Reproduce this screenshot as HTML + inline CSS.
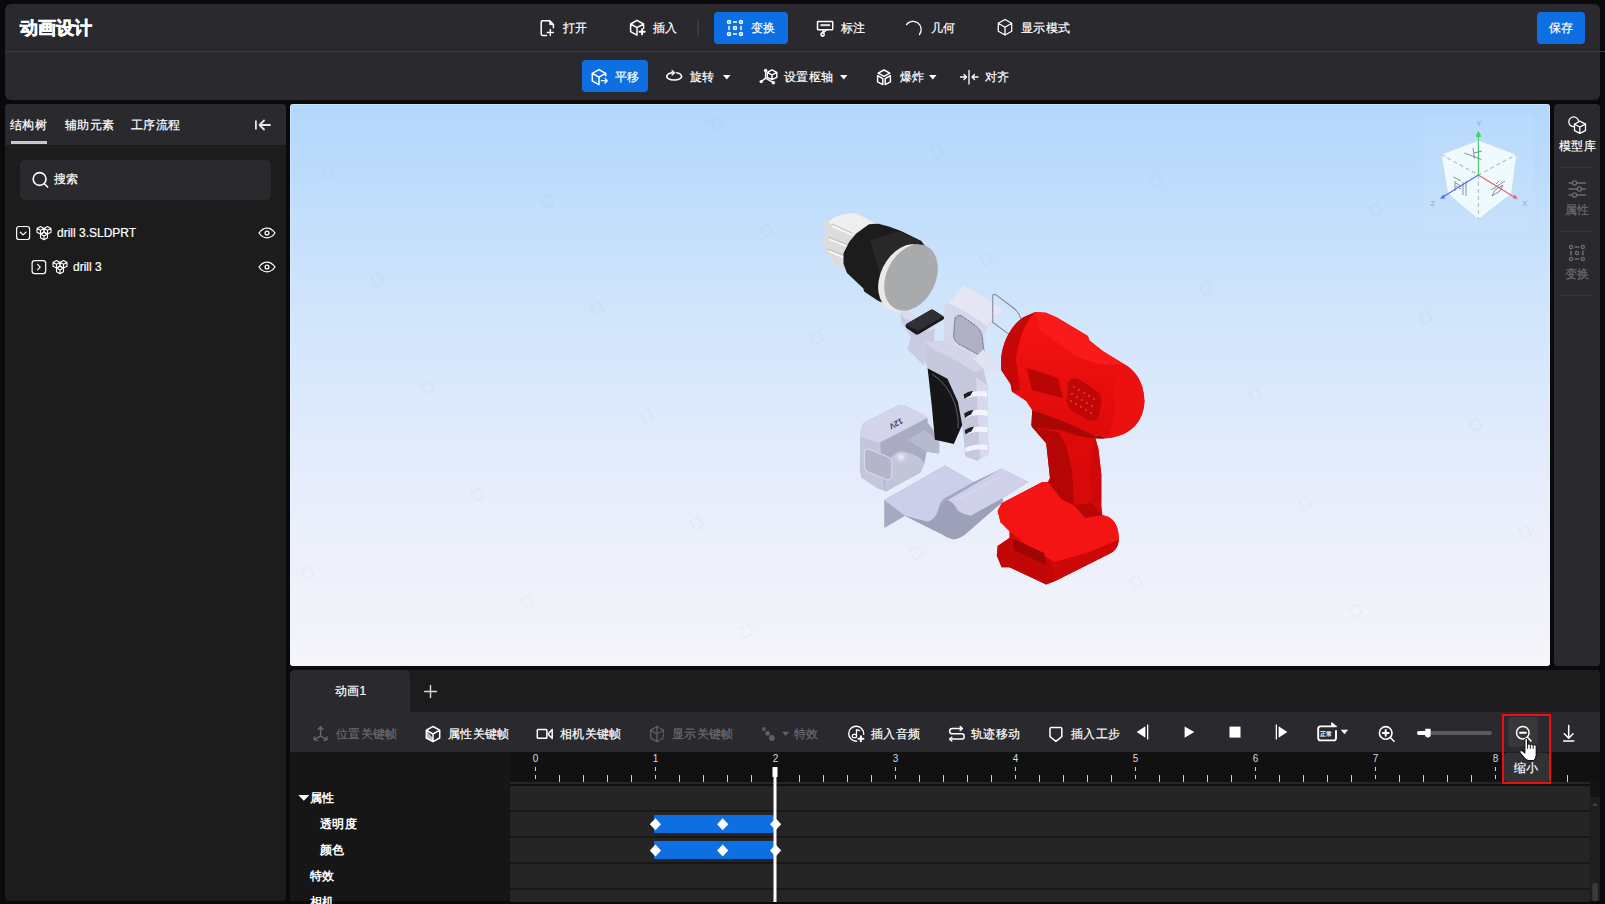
<!DOCTYPE html>
<html><head><meta charset="utf-8">
<style>
*{margin:0;padding:0;box-sizing:border-box}
html,body{width:1605px;height:904px;overflow:hidden;background:#0a0a0c;font-family:"Liberation Sans",sans-serif;color:#fff}
.a{position:absolute}
.t{position:absolute;white-space:nowrap;line-height:1;font-size:12px;letter-spacing:0.3px;color:#fff;-webkit-text-stroke:0.2px currentColor}
svg{position:absolute;overflow:visible}
#hdr{left:5px;top:4px;width:1595px;height:96px;background:#2a292e;border-radius:6px}
#sep1{left:5px;top:51px;width:1600px;height:1px;background:#3b3a3f}
.btn{position:absolute;border-radius:4px;background:#0e6fe3}
#left{left:5px;top:104px;width:281px;height:797px;background:#1c1c1d;border-radius:4px}
#lefttabs{left:5px;top:104px;width:281px;height:41px;background:#2a292e;border-radius:4px 4px 0 0}
#vp{left:290px;top:104px;width:1260px;height:562px;border-radius:3px;background:linear-gradient(#b2d7fd 0%,#d3e6fb 40%,#e9eefb 72%,#f5f5fa 100%);box-shadow:inset 0 0 0 1px rgba(225,242,255,0.45)}
#rside{left:1554px;top:104px;width:46px;height:562px;background:#2a292e;border-radius:4px}
#tl{left:290px;top:670px;width:1310px;height:231px;background:#1c1c1d;border-radius:4px;overflow:hidden}
.b{font-weight:bold;-webkit-text-stroke:0}
.g{color:#6b6b70}
</style></head><body>
<div id="hdr" class="a"></div>
<div id="sep1" class="a"></div>
<div class="t b" style="left:20px;top:19px;font-size:18px;letter-spacing:0;-webkit-text-stroke:0.5px #fff">动画设计</div>

<div class="btn" style="left:714px;top:12px;width:74px;height:32px"></div>
<div class="btn" style="left:1537px;top:12px;width:48px;height:32px"></div>
<div class="btn" style="left:582px;top:60px;width:66px;height:32px"></div>

<!-- header texts row1 -->
<div class="t" style="left:563px;top:22px">打开</div>
<div class="t" style="left:653px;top:22px">插入</div>
<div class="t" style="left:751px;top:22px">变换</div>
<div class="t" style="left:841px;top:22px">标注</div>
<div class="t" style="left:931px;top:22px">几何</div>
<div class="t" style="left:1021px;top:22px">显示模式</div>
<div class="t" style="left:1549px;top:22px">保存</div>
<!-- row2 -->
<div class="t" style="left:615px;top:71px">平移</div>
<div class="t" style="left:690px;top:71px">旋转</div>
<div class="t" style="left:784px;top:71px">设置枢轴</div>
<div class="t" style="left:900px;top:71px">爆炸</div>
<div class="t" style="left:985px;top:71px">对齐</div>

<div id="left" class="a"></div>
<div id="lefttabs" class="a"></div>
<div id="vp" class="a"></div>
<svg width="1605" height="904" style="left:0;top:0"><g fill="none" stroke="#4a7ab0" stroke-opacity="0.11" stroke-width="1" stroke-dasharray="1.5 1"><rect x="303.2" y="568.0" width="9" height="10" transform="rotate(-28 307.7 573.0)"/><rect x="323.5" y="167.4" width="9" height="10" transform="rotate(-28 328.0 172.4)"/><rect x="373.3" y="274.8" width="9" height="10" transform="rotate(-28 377.8 279.8)"/><rect x="423.1" y="382.2" width="9" height="10" transform="rotate(-28 427.6 387.2)"/><rect x="472.9" y="489.6" width="9" height="10" transform="rotate(-28 477.4 494.6)"/><rect x="522.7" y="597.0" width="9" height="10" transform="rotate(-28 527.2 602.0)"/><rect x="543.0" y="196.4" width="9" height="10" transform="rotate(-28 547.5 201.4)"/><rect x="592.8" y="303.8" width="9" height="10" transform="rotate(-28 597.3 308.8)"/><rect x="642.6" y="411.2" width="9" height="10" transform="rotate(-28 647.1 416.2)"/><rect x="692.4" y="518.6" width="9" height="10" transform="rotate(-28 696.9 523.6)"/><rect x="742.2" y="626.0" width="9" height="10" transform="rotate(-28 746.7 631.0)"/><rect x="712.7" y="118.0" width="9" height="10" transform="rotate(-28 717.2 123.0)"/><rect x="762.5" y="225.4" width="9" height="10" transform="rotate(-28 767.0 230.4)"/><rect x="812.3" y="332.8" width="9" height="10" transform="rotate(-28 816.8 337.8)"/><rect x="862.1" y="440.2" width="9" height="10" transform="rotate(-28 866.6 445.2)"/><rect x="911.9" y="547.6" width="9" height="10" transform="rotate(-28 916.4 552.6)"/><rect x="932.2" y="147.0" width="9" height="10" transform="rotate(-28 936.7 152.0)"/><rect x="982.0" y="254.4" width="9" height="10" transform="rotate(-28 986.5 259.4)"/><rect x="1031.8" y="361.8" width="9" height="10" transform="rotate(-28 1036.3 366.8)"/><rect x="1081.6" y="469.2" width="9" height="10" transform="rotate(-28 1086.1 474.2)"/><rect x="1131.4" y="576.6" width="9" height="10" transform="rotate(-28 1135.9 581.6)"/><rect x="1151.7" y="176.0" width="9" height="10" transform="rotate(-28 1156.2 181.0)"/><rect x="1201.5" y="283.4" width="9" height="10" transform="rotate(-28 1206.0 288.4)"/><rect x="1251.3" y="390.8" width="9" height="10" transform="rotate(-28 1255.8 395.8)"/><rect x="1301.1" y="498.2" width="9" height="10" transform="rotate(-28 1305.6 503.2)"/><rect x="1350.9" y="605.6" width="9" height="10" transform="rotate(-28 1355.4 610.6)"/><rect x="1371.2" y="205.0" width="9" height="10" transform="rotate(-28 1375.7 210.0)"/><rect x="1421.0" y="312.4" width="9" height="10" transform="rotate(-28 1425.5 317.4)"/><rect x="1470.8" y="419.8" width="9" height="10" transform="rotate(-28 1475.3 424.8)"/><rect x="1520.6" y="527.2" width="9" height="10" transform="rotate(-28 1525.1 532.2)"/></g></svg>
<svg width="1605" height="904" style="left:0;top:0">
<defs>
  <linearGradient id="gHous" x1="0" y1="0" x2="1" y2="1">
    <stop offset="0" stop-color="#e4e5f4"/><stop offset="1" stop-color="#b9bbd3"/>
  </linearGradient>
  <linearGradient id="gRed2" x1="0" y1="0" x2="0" y2="1"><stop offset="0" stop-color="#f71313"/><stop offset="0.45" stop-color="#de0a0a"/><stop offset="1" stop-color="#d00808"/></linearGradient>
  <linearGradient id="gRed" x1="0" y1="0" x2="1" y2="0">
    <stop offset="0" stop-color="#d80c0c"/><stop offset="0.5" stop-color="#f01515"/><stop offset="1" stop-color="#e41010"/>
  </linearGradient>
  <linearGradient id="gTip" x1="0" y1="0" x2="1" y2="1">
    <stop offset="0" stop-color="#f4f4f4"/><stop offset="1" stop-color="#c8c8c8"/>
  </linearGradient>
  <linearGradient id="gBase" x1="0" y1="0" x2="0" y2="1">
    <stop offset="0" stop-color="#d2d4ec"/><stop offset="1" stop-color="#b4b6cf"/>
  </linearGradient>
</defs>
<!-- view cube -->
<g>
  <rect x="1423" y="114" width="111" height="113" fill="#ffffff" opacity="0.06"/>
  <path d="M1478.4 140.3L1516.6 154.5L1511.6 193.6L1478.4 219.5L1447.9 193.6L1441.2 154.5Z" fill="#f2fcff" opacity="0.93"/>
  <g stroke="#b9bdc6" stroke-width="1.2" stroke-dasharray="4 3" fill="none">
    <path d="M1441.2 154.5L1478.4 175L1516.6 154.5M1478.4 175V219.5"/>
  </g>
  <g stroke="#d0d4da" stroke-width="0.8" fill="none" opacity="0.8">
    <path d="M1478.4 140.3L1516.6 154.5L1511.6 193.6L1478.4 219.5L1447.9 193.6L1441.2 154.5Z"/>
  </g>
  <path d="M1478.4 175V134" stroke="#44d36a" stroke-width="1.2"/>
  <path d="M1476.2 136.5L1478.4 131.5L1480.6 136.5Z" fill="#44d36a" stroke="#44d36a" stroke-width="1"/>
  <path d="M1478.4 175L1442 197.5" stroke="#4f6cf5" stroke-width="1.2"/>
  <path d="M1440 198.7L1443.5 194.6L1445 198.4Z" fill="#4f6cf5"/>
  <path d="M1478.4 175L1515 197.5" stroke="#e8606a" stroke-width="1.2"/>
  <path d="M1518 198.7L1514.5 194.6L1513 198.4Z" fill="#e8606a"/>
  <g font-family="Liberation Sans" font-size="8" fill="#a0a6b0" text-anchor="middle">
    <text x="1479" y="126">Y</text><text x="1432.6" y="205.5">Z</text><text x="1525" y="205.5">X</text>
  </g>
  <g stroke="#6b7280" stroke-width="0.8" fill="none">
    <path d="M1464.5 153L1481.5 159.5M1473 148L1474.5 158.5M1474 153L1482 151"/>
    <path d="M1453.5 177L1461 181M1455 181V191M1455.5 183L1461 186M1456 186L1461 189M1463 182V195M1466 181V196"/>
    <path d="M1491 190L1505 181M1496 184L1499 181M1492 196L1500 191L1503 185L1495 190Z"/>
  </g>
</g>
<!-- battery base plate -->
<path d="M884.5 499.9L944.8 465.5L973.7 481.9L1001.6 468.5L1028.5 481.9L1002.6 497.9L1002.6 501.9Q990 512 964.7 534.8Q958 539.5 952.8 539.2Q947 538 942.8 534.8L904.9 515.8L884.5 527.8Z" fill="#a4a7c0"/>
<path d="M884.5 499.9L884.5 527.8L904.9 515.8L888 502.9Z" fill="#a7a9c2"/>
<path d="M904.9 515.8L927.9 521.8Q935 520 937.8 513.8Q940 503 947.8 500.9Q953 501 957.8 510.8Q963 515 970.7 515.8L1002.6 497.9L1002.6 501.9L964.7 534.8Q958 539.5 952.8 539.2Q947 538 942.8 534.8Z" fill="#9da0b8"/>
<path d="M884.5 499.9L944.8 465.5L973.7 481.9L947 497Q940 500 938.8 508Q936 519 927.9 521.8L905 515.8L888 502.9Z" fill="#cccfe9"/>
<path d="M947.8 499.9L1001.6 468.5L1028.5 481.9L1002.6 497.9L970.7 515.8Q963 514 957.8 510.8Q954 502 947.8 499.9Z" fill="#cfd1ea"/>
<path d="M956 500L1000 477" stroke="#e8e9f6" stroke-width="0.8" stroke-dasharray="2 1.5" fill="none"/>
<!-- battery cap -->
<path d="M860.3 431.5L863.4 423.1L899.2 404.7L904.4 405.3L922.3 413.7L927.5 417.9L927.5 422.6L932.8 429.4L939.1 442.1L939.1 453.6L926.5 451.5L924.4 463.1L920.2 472.5L885.5 491.5L877.1 488.3L861.3 477.8L859.7 469.4Z" fill="#c4c6dc"/>
<path d="M860.3 431.5L863.4 423.1L899.2 404.7L904.4 405.3L922.3 413.7L927.5 417.9L880.2 442.5L877 442L861 437Z" fill="#d2d4e9"/>
<path d="M880.2 442.5L927.5 417.9L927.5 422.6L932.8 429.4L939.1 442.1L939.1 453.6L926.5 451.5L924.4 463.1L920.2 472.5L885.5 491.5L882 470L881 455Z" fill="#a9abc2"/>
<path d="M884 468Q890 452 905 452Q920 455 924.4 463.1L920.2 472.5L885.5 491.5Z" fill="#c2c4da"/>
<radialGradient id="hl"><stop offset="0" stop-color="#f4f5ff"/><stop offset="1" stop-color="#c2c4da" stop-opacity="0"/></radialGradient><ellipse cx="901" cy="457" rx="9" ry="8" fill="url(#hl)"/>
<path d="M907 440L925 430L939.1 442.1L939.1 453.6L926.5 451.5Z" fill="#b7b9cf"/>
<path d="M864.5 452Q865 448 869 449L888 457Q892 459 891.8 464L891.5 476Q891 481 886 479.5L868 472Q864.5 470 864.5 466Z" fill="#b3b5cb" stroke="#d6d8ea" stroke-width="1.2"/>
<text x="901" y="418" transform="rotate(152 901 418)" font-family="Liberation Sans" font-size="8" font-weight="bold" fill="#3c3d48">12V</text>
<!-- housing left small part -->
<path d="M900.3 313.6L907.6 311.5L934.9 328.3L933.9 343L924.4 343L924.4 366L907.6 349.3L910.8 336.7L901.3 322Z" fill="#c9cbe0"/>
<path d="M900.3 313.6L907.6 311.5L934.9 328.3L930 331L905 318Z" fill="#dadcee"/>
<!-- housing upper cup -->
<path d="M944.4 306.3L964.3 285.3L1004.2 310.5Q990 318 985.3 332.5L983.2 349.3Q990 360 1000 364L998 372.4L983.2 372.4Q965 365 955 355L944 345Z" fill="#d5d7eb"/>
<path d="M964.3 285.3L1004.2 310.5Q992 316 987 326Q968 312 948 303Z" fill="#e6e7f5"/>
<path d="M955 318Q958 314 962 316L976 326Q981 330 982 336L984 350Q984 357 979 355L959 344Q954 341 953.5 336Z" fill="#aeb0c6" stroke="#33333c" stroke-width="0.7" stroke-dasharray="1.2 0.7"/>
<path d="M983.2 349.3Q990 360 1000 364L998 372.4L983.2 372.4Q970 368 962 360L975 358Z" fill="#e2e3f2"/>
<!-- housing lower body -->
<path d="M924.4 342L943.3 340.9L964.3 351.4L983.2 368.2L987.4 385L988.5 454.4L976.9 460.7L965.4 456.5L962.2 425L958 401.9L947.5 378.7L927.6 368.2L924.4 360Z" fill="#c6c8de"/>
<path d="M924.4 342L943.3 340.9L964.3 351.4L983.2 368.2L975 372L955 360L935 350Z" fill="#d3d5e9"/>
<path d="M976 378L987.4 385L988.5 454.4L980 459Z" fill="#d7d9ed"/>
<g fill="#f4f5fc">
  <path d="M963.5 394.5Q975 389.5 987 391.5L987 397Q975 394.5 964.5 399Z"/>
  <path d="M964 413.4Q975 408.4 987.5 410.4L987.5 416Q975 413.4 965 418Z"/>
  <path d="M964.5 430.2Q975 425.2 987.5 427.2L987.5 432.6Q975 430.2 965.5 434.6Z"/>
  <path d="M965 448Q975 443 987.5 445L987.5 450Q975 448 966 452Z"/>
</g>
<g fill="#1f1f24">
  <path d="M963.5 394.5Q968 391.5 973 390.8L970.5 395.6Q967 396.8 964.5 399Z"/>
  <path d="M964 413.4Q968.5 410.4 973.5 409.7L971 414.5Q967.5 415.7 965 418Z"/>
  <path d="M964.5 430.2Q969 427.2 974 426.5L971.5 431.3Q968 432.5 965.5 434.6Z"/>
</g>
<!-- black grip insert -->
<path d="M927.6 368.2L947.5 378.7L958 401.9L962.2 425L953.8 443.9L934.9 439.7L931.8 406.1Z" fill="#161618"/>
<path d="M932 374Q948 384 955 404Q959 418 958 428" stroke="#6a6a70" stroke-width="0.9" fill="none"/>
<!-- black key -->
<path d="M906 324.3L930.5 310Q932 309 933.5 310L943.5 316.5Q945 318 943.3 319.5L918.5 334.3Q917 335 915.5 334.3L906.5 328Q904.5 326 906 324.3Z" fill="#1a1a1c"/>
<path d="M906 324.3L930.5 310Q932 309 933.5 310L943.5 316.5L918 331L906.5 325Z" fill="#303034"/>
<!-- wire loop -->
<path d="M992.7 323V296Q992.7 293.7 995.8 294.7L1012.6 307.3Q1019 312 1021 318.9M993 322.5L1009.5 334.6" stroke="#8a8c96" stroke-width="1.1" fill="none"/>
<!-- chuck -->
<path d="M826.6 228.2L821.6 225.1L824.3 221.7L827.8 222.4C835 215 846 212.5 857.6 213.9L873.9 222.4C860 229 850 242 844.4 254.6C843 262 843.5 267 844.4 270.8C835 266 826 256 822.7 242.2Z" fill="#dcdcdc"/>
<path d="M827.8 222.4C835 215 846 212.5 857.6 213.9L873.9 222.4C866 226 860 229 855 234L835 226Z" fill="#efefef"/>
<path d="M832 226L853 235M829 239L849 247M829 251L845 258" stroke="#f6f6f6" stroke-width="2.2" fill="none"/>
<path d="M832 224L852 233M828 237L848 245M828 249L845 256" stroke="#a8a8a8" stroke-width="0.7" fill="none"/>
<path d="M856.3 233.6L869 224.3L878.3 223.7L888.8 226.6L900.4 230.7L909.7 235.3L921.3 241.1L925 246L890 305L878.3 301L864.4 291.7L863.2 288.2L847 273.1L843.5 263.8L843.5 253.3L849.3 241.7Z" fill="#1c1c1c"/>
<path d="M870 240L900 231L921 241L900 270L882 282Z" fill="#282828"/>
<ellipse cx="905.5" cy="278" rx="35.5" ry="25" transform="rotate(-64 905.5 278)" fill="#e9e9e9"/>
<ellipse cx="911" cy="277.5" rx="35" ry="24.5" transform="rotate(-64 911 277.5)" fill="#a8aaab"/>

<!-- red drill -->
<path d="M1001.2 357.6C1003 340 1012 325 1022.9 317.4L1035.3 312L1046.1 312.7L1056.9 317.4L1087.9 336L1089.5 340.6L1103.4 351.5L1123.5 363.8C1135 370 1144 382 1144.4 401C1144 420 1132 436 1106.5 438.2L1100.3 435L1094.6 435.5L1098.4 449L1101.3 474.2L1101.3 503.3L1102.3 514.9L1108.1 516.8C1115 520 1119 528 1118.8 540.1C1118 548 1114 552 1110 553.6L1055.8 580.7L1046.2 584.6L1009.4 567.2L1001.6 567.2L996.8 555.6L997.7 545.9L1009.4 538.1L1009.4 528.4L1000.6 522.6L997.7 511L1001.6 503.3L1042.3 482L1048.1 482L1050 478.1L1046.2 443.2L1032.6 427.7L1031.4 425.8L1032.2 410.3L1026 401L1012 391.7L1010.5 384L1001.2 370Z" fill="url(#gRed2)"/>
<!-- front ring darker -->
<path d="M1001.2 357.6C1003 340 1012 325 1022.9 317.4L1035.3 312C1025 322 1018 340 1016 360L1020 390L1012 391.7L1010.5 384L1001.2 370Z" fill="#c60707"/>
<!-- top highlight -->
<path d="M1035.3 312L1046.1 312.7L1056.9 317.4L1087.9 336L1089.5 340.6L1103.4 351.5L1123.5 363.8C1110 366 1090 365 1070 352L1040 330Z" fill="#fa1a1a"/>
<!-- end cap -->
<path d="M1123.5 363.8C1135 370 1144 382 1144.4 401C1144 420 1132 436 1106.5 438.2C1115 425 1118 400 1112 375Z" fill="#ec1010"/>
<!-- latch rect -->
<path d="M1026.7 368L1058 378L1063 397.9L1032 390Z" fill="#b80606"/>
<!-- vent -->
<path d="M1068 383Q1072 376 1080 380L1098 392Q1103 397 1101 404L1098 418Q1095 423 1088 420L1071 410Q1066 405 1067 398Z" fill="#c00707"/>
<g fill="#ff4040" opacity="0.8">
  <circle cx="1074" cy="387" r="1"/><circle cx="1079" cy="390" r="1"/><circle cx="1084" cy="393" r="1"/><circle cx="1089" cy="396" r="1"/><circle cx="1094" cy="399" r="1"/>
  <circle cx="1072" cy="394" r="1"/><circle cx="1077" cy="397" r="1"/><circle cx="1082" cy="400" r="1"/><circle cx="1087" cy="403" r="1"/><circle cx="1092" cy="406" r="1"/>
  <circle cx="1071" cy="401" r="1"/><circle cx="1076" cy="404" r="1"/><circle cx="1081" cy="407" r="1"/><circle cx="1086" cy="410" r="1"/><circle cx="1091" cy="413" r="1"/>
</g>
<!-- underside shadow -->
<path d="M1032.2 410.3L1060 420L1094.6 435.5L1100.3 435L1106.5 438.2C1095 440 1080 437 1060 430L1032.6 427.7L1031.4 425.8Z" fill="#a90606"/>
<!-- grip front darker -->
<path d="M1032.6 427.7L1046.2 443.2L1050 478.1L1048.1 482L1062 500L1074 505L1072 470L1066 445L1058 432Z" fill="#b50606"/>
<path d="M1094.6 435.5L1098.4 449L1101.3 474.2L1101.3 503.3L1092 503L1090 470Z" fill="#cf0909"/>
<!-- base top lighter -->
<path d="M1001.6 503.3L1042.3 482L1048.1 482L1062 500L1080 508L1102.3 514.9L1108.1 516.8C1115 520 1119 528 1118.8 540.1L1090 552L1055 562L1030 548L1008 530L1000.6 522.6L997.7 511Z" fill="#f41414"/>
<path d="M1074 505L1092 503L1102.3 514.9L1085 518Z" fill="#b80606"/>
<!-- base front darker -->
<path d="M997.7 545.9L1009.4 538.1L1030 548L1050 560L1055.8 580.7L1046.2 584.6L1009.4 567.2L1001.6 567.2L996.8 555.6Z" fill="#c20707"/>
<path d="M1012 538L1044 553L1046 565L1014 550Z" fill="#9e0505"/>
<path d="M1055.8 580.7L1110 553.6C1114 552 1118 548 1118.8 540.1L1090 552L1055 562Z" fill="#cc0808"/>
</svg>

<div id="rside" class="a"></div>
<div id="tl" class="a"></div>

<!-- LEFT PANEL CONTENT -->
<div class="t" style="left:10px;top:119px">结构树</div>
<div class="t" style="left:65px;top:119px">辅助元素</div>
<div class="t" style="left:131px;top:119px">工序流程</div>
<div class="a" style="left:11px;top:141px;width:36px;height:3px;background:#c9c9c9"></div>
<div class="a" style="left:20px;top:160px;width:251px;height:40px;background:#2a292e;border-radius:5px"></div>
<div class="t" style="left:54px;top:173px">搜索</div>
<div class="t" style="left:57px;top:227px;font-size:12px;letter-spacing:0">drill 3.SLDPRT</div>
<div class="t" style="left:73px;top:261px;font-size:12px;letter-spacing:0">drill 3</div>

<!-- RIGHT SIDEBAR -->
<div class="t" style="left:1559px;top:140px">模型库</div>
<div class="a" style="left:1560px;top:167px;width:33px;height:1px;background:#37363b"></div>
<div class="t g" style="left:1565px;top:204px">属性</div>
<div class="a" style="left:1560px;top:231px;width:33px;height:1px;background:#37363b"></div>
<div class="t g" style="left:1565px;top:268px">变换</div>
<div class="a" style="left:1560px;top:295px;width:33px;height:1px;background:#37363b"></div>

<!-- TIMELINE -->
<div class="a" style="left:290px;top:670px;width:120px;height:42px;background:#2a292e;border-radius:5px 5px 0 0"></div>
<div class="a" style="left:290px;top:712px;width:1310px;height:40px;background:#2a292e"></div>
<div class="a" style="left:290px;top:752px;width:220px;height:149px;background:#161617"></div>
<div class="a" style="left:510px;top:752px;width:1090px;height:30px;background:#111112"></div>
<div class="a" style="left:510px;top:782px;width:1090px;height:119px;background:#171718"></div>
<div class="a" style="left:510px;top:786px;width:1080px;height:24px;background:#252526"></div>
<div class="a" style="left:510px;top:812px;width:1080px;height:24px;background:#252526"></div>
<div class="a" style="left:510px;top:838px;width:1080px;height:24px;background:#252526"></div>
<div class="a" style="left:510px;top:864px;width:1080px;height:24px;background:#252526"></div>
<div class="a" style="left:510px;top:890px;width:1080px;height:12px;background:#252526"></div>
<div class="a" style="left:1590px;top:782px;width:10px;height:119px;background:#1e1e1f"></div>
<div class="a" style="left:654px;top:815px;width:121px;height:18px;background:#0e6fe3"></div>
<div class="a" style="left:654px;top:841px;width:121px;height:18px;background:#0e6fe3"></div>

<div class="t" style="left:335px;top:685px">动画1</div>
<div class="t g" style="left:336px;top:728px">位置关键帧</div>
<div class="t" style="left:448px;top:728px">属性关键帧</div>
<div class="t" style="left:560px;top:728px">相机关键帧</div>
<div class="t g" style="left:672px;top:728px">显示关键帧</div>
<div class="t g" style="left:794px;top:728px">特效</div>
<div class="t" style="left:871px;top:728px">插入音频</div>
<div class="t" style="left:971px;top:728px">轨迹移动</div>
<div class="t" style="left:1071px;top:728px">插入工步</div>

<div class="t b" style="left:310px;top:792px">属性</div>
<div class="t b" style="left:320px;top:818px">透明度</div>
<div class="t b" style="left:320px;top:844px">颜色</div>
<div class="t b" style="left:310px;top:870px">特效</div>
<div class="t b" style="left:310px;top:896px">相机</div>

<svg width="1605" height="904" style="left:0;top:0" fill="none" stroke="#fff" stroke-width="1.3" stroke-linecap="round" stroke-linejoin="round">
  <!-- 打开 file+ -->
  <path d="M546.5 35.4H542.6Q541.2 35.4 541.2 34V22.1Q541.2 20.7 542.6 20.7H549.8L553.4 24.6V27.8" stroke-width="1.5"/>
  <path d="M549.8 21.5V24.6H552.6Z" fill="#fff" stroke-width="1"/><path d="M550.3 29.4V35.6M547.2 32.5H553.4" stroke-width="1.4"/>
  <!-- 插入 cube+ -->
  <path d="M637 20.4L630.6 24V31.6L637 35.2M637 20.4L643.6 24V28.6M630.6 24L637 27.6L643.6 24M637 27.6V35" stroke-width="1.5"/>
  <path d="M642.1 29.2V34.4M639.5 31.8H644.7" stroke-width="1.9"/>
  <rect x="697.5" y="19.5" width="1.2" height="16.5" fill="#48484d" stroke="none"/>
  <!-- 变换 grid -->
  <g stroke-width="1.5">
    <circle cx="729" cy="22" r="1.5"/><circle cx="741" cy="22" r="1.5"/><circle cx="735" cy="28" r="1.5"/>
    <circle cx="729" cy="34" r="1.5"/><circle cx="741" cy="34" r="1.5"/>
    <path d="M733.5 22H736.5M733.5 34H736.5M729 26.5V29.5M741 26.5V29.5"/>
  </g>
  <!-- 标注 -->
  <rect x="817.5" y="21.5" width="15.2" height="8.2" rx="0.6" stroke-width="1.5"/>
  <rect x="820.4" y="24.1" width="9.7" height="2.1" fill="#dadada" stroke="none"/>
  <path d="M826.6 29.8L823 33M822.8 29.8L823 32.6" stroke-width="1.4"/>
  <circle cx="822.6" cy="34.5" r="1.6" stroke-width="1.6"/>
  <!-- 几何 arc -->
  <path d="M906.5 24.5A8 8 0 0 1 919.5 34.5"/>
  <!-- 显示模式 cube -->
  <path d="M1005 19.5L998.3 23.3V31.2L1005 35L1011.7 31.2V23.3ZM998.3 23.3L1005 27.2L1011.7 23.3M1005 27.2V35"/>
  <!-- row2 平移 cube arrow -->
  <path d="M599 69.6L592.3 73.4V81L599 84.6M599 69.6L605.7 73.4V75.8M592.3 73.4L599 77.2L605.7 73.4M599 77.2V84.4" stroke-width="1.5"/>
  <path d="M601.3 80.7H607.2M605 78.4L607.3 80.7L605 83"/>
  <!-- 旋转 -->
  <path d="M676.8 72.85A7.4 3.75 0 1 1 671.6 72.85" stroke-width="1.5"/>
  <path d="M672.2 70.2L675.3 72.8L672.2 75.3Z" fill="#fff" stroke-width="0.6"/>
  <path d="M723 75H730.5L726.75 79.5Z" fill="#fff" stroke="none"/>
  <!-- 设置枢轴 -->
  <path d="M772 69.9L776.8 72.4V77.4L772 79.6L767.3 77.4V72.4ZM767.3 72.4L772 75L776.8 72.4M772 75V79.5" stroke-width="1.4"/>
  <path d="M765.6 70.3V78.1L761.3 81.5M765.6 78.1L773.3 82.6" stroke-width="1.4"/>
  <circle cx="765.6" cy="70.4" r="1.7" fill="#fff" stroke="none"/><circle cx="761.2" cy="81.6" r="1.7" fill="#fff" stroke="none"/><circle cx="773.4" cy="82.7" r="1.7" fill="#fff" stroke="none"/>
  <path d="M840 75H847.5L843.75 79.5Z" fill="#fff" stroke="none"/>
  <!-- 爆炸 -->
  <path d="M884 70L889.8 73.2L884 76.3L878.2 73.2ZM877.6 75.6L882.8 78.6V84.6L877.6 81.8ZM890.4 75.6L885.2 78.6V84.6L890.4 81.8Z" stroke-width="1.5"/>
  <path d="M929 75H936.5L932.75 79.5Z" fill="#fff" stroke="none"/>
  <!-- 对齐 -->
  <path d="M969 70.5V84M960.5 77H966.5M964 74.5L966.5 77L964 79.5M978 77H972M974.5 74.5L972 77L974.5 79.5"/>
</svg>

<svg width="1605" height="904" style="left:0;top:0" fill="none" stroke="#fff" stroke-width="1.3" stroke-linecap="round" stroke-linejoin="round">
  <!-- collapse |<- -->
  <g stroke="#e6e6e6" stroke-width="1.8">
    <path d="M255.9 120.5V129.6" stroke-linecap="butt"/>
    <path d="M264 120.5L259.5 125L264 129.5M259.5 125H270"/>
  </g>
  <!-- search icon -->
  <circle cx="39.6" cy="179" r="6.4" stroke-width="1.6"/>
  <path d="M44.3 183.7L47.6 187" stroke-width="1.6"/>
  <!-- tree row1 -->
  <rect x="16.6" y="226.5" width="13" height="13" rx="2.6" stroke-width="1.2"/>
  <path d="M20.3 232.2L23.1 234.9L25.9 232.2" stroke-width="1.2"/>
  <g id="mdl" stroke-width="1.1">
    <path d="M40.5 226.5L37 228.4V232.2L40.5 234.1L44 232.2V228.4ZM37 228.4L40.5 230.3L44 228.4M40.5 230.3V234"/>
    <path d="M47.5 226.5L44 228.4V232.2L47.5 234.1L51 232.2V228.4ZM44 228.4L47.5 230.3L51 228.4M47.5 230.3V234"/>
    <path d="M44 232.2L40.5 234.1V237.8L44 239.7L47.5 237.8V234.1ZM40.5 234.1L44 236L47.5 234.1M44 236V239.6"/>
  </g>
  <path d="M259 233C263.5 226.5 270.5 226.5 275 233C270.5 239.5 263.5 239.5 259 233Z" stroke-width="1.3"/>
  <circle cx="267" cy="233" r="1.9" stroke-width="1.3"/>
  <!-- tree row2 -->
  <rect x="32.1" y="260.6" width="13.6" height="13" rx="2.6" stroke-width="1.2"/>
  <path d="M37.6 264.4L40.2 267.1L37.6 269.8" stroke-width="1.2"/>
  <use href="#mdl" transform="translate(16 34)"/>
  <path d="M259 267C263.5 260.5 270.5 260.5 275 267C270.5 273.5 263.5 273.5 259 267Z" stroke-width="1.3"/>
  <circle cx="267" cy="267" r="1.9" stroke-width="1.3"/>

  <!-- sidebar: model lib -->
  <circle cx="1573.7" cy="121.8" r="4.9" stroke-width="1.3"/>
  <path d="M1579.8 121.2L1574.5 124.2V130.6L1579.8 133.4L1585.5 130.6V124.2Z" fill="#2a292e" stroke-width="1.3"/>
  <path d="M1574.5 124.2L1579.8 127L1585.5 124.2M1579.8 127V133.2" stroke-width="1.3"/>
  <!-- props -->
  <g stroke="#6e6e72" stroke-width="1.3">
    <path d="M1569 183H1572.3M1576.7 183H1585.5M1569 189H1577.2M1581.6 189H1585.5M1569 195H1572.3M1576.7 195H1585.5"/>
    <circle cx="1574.5" cy="183" r="2.1"/><circle cx="1579.4" cy="189" r="2.1"/><circle cx="1574.5" cy="195" r="2.1"/>
  </g>
  <g stroke="#6e6e72" stroke-width="1.3">
    <circle cx="1571" cy="247" r="1.6"/><circle cx="1582.8" cy="247" r="1.6"/><circle cx="1577" cy="253" r="1.6"/>
    <circle cx="1571" cy="259" r="1.6"/><circle cx="1582.8" cy="259" r="1.6"/>
    <path d="M1575.3 247H1578.5M1575.3 259H1578.5M1571 251.3V254.7M1582.8 251.3V254.7" stroke-width="1.6"/>
  </g>

  <!-- timeline tab + -->
  <path d="M430.5 685.5V697.5M424.5 691.5H436.5" stroke="#dcdcdc" stroke-width="1.4"/>
  <!-- pos keyframe axis (gray) -->
  <g stroke="#6a6a6e" stroke-width="1.4">
    <path d="M320.6 736V727M318.3 729.2L320.6 726.8L322.9 729.2"/>
    <path d="M320.6 736L314.5 739.7M314.4 736.9L314.2 739.9L317.3 740.4"/>
    <path d="M320.6 736L326.7 739.7M326.8 736.9L327 739.9L323.9 740.4"/>
  </g>
  <!-- prop keyframe cube -->
  <path d="M426.5 730.2L433 738.2V741.6L426.5 738Z" fill="#bcbcbc" stroke="none"/>
  <path d="M433 726.5L426.3 730.2V738L433 741.7L439.7 738V730.2ZM426.3 730.2L433 734L439.7 730.2M433 734V741.5" stroke-width="1.5"/>
  <!-- camera -->
  <rect x="537.3" y="729.4" width="9.6" height="8.9" rx="0.8" stroke-width="1.5"/>
  <path d="M552.2 729.5V738.5M552.2 729.5L548 734L552.2 738.5" stroke-width="1.5"/>
  <!-- display keyframe gray half cube -->
  <g stroke="#5f5f63" stroke-width="1.4">
    <path d="M657 726.5L650.6 730.2V738L657 741.6V734L650.6 730.2M657 726.5V734"/>
    <path d="M657 726.5L663.4 730.2V738L657 741.6M663.4 730.2L657 734" stroke-dasharray="2 2"/>
  </g>
  <!-- effects dots -->
  <g fill="#5f5f63" stroke="none">
    <circle cx="764" cy="729" r="1.9"/><circle cx="767.6" cy="733.4" r="2.4"/><circle cx="771.9" cy="738" r="2.9"/>
    <path d="M782 731.8H789L785.5 736Z"/>
  </g>
  <!-- insert audio -->
  <path d="M856.5 741.2A7.5 7.5 0 1 1 863.7 734.2" stroke-width="1.4"/>
  <rect x="852.4" y="734.3" width="4.1" height="3.4" rx="1.2" stroke-width="1.3"/>
  <path d="M856.5 736V729.7L859.6 730.6" stroke-width="1.3"/>
  <path d="M860.9 736.3V741.3M858.4 738.8H863.4" stroke-width="2"/>
  <!-- trajectory -->
  <path d="M962 728.5H952.3A2.65 2.65 0 0 0 952.3 733.8H961.6A2.65 2.65 0 0 1 961.6 739.1H950" stroke-width="1.5"/>
  <path d="M960.2 726.6L962.4 728.5L960.2 730.4M951.8 737.2L949.6 739.1L951.8 741" stroke-width="1.5"/>
  <!-- insert step shield -->
  <path d="M1050 728.5A1.2 1.2 0 0 1 1051.2 727.4H1060.6A1.2 1.2 0 0 1 1061.8 728.5V736.6L1055.9 741.4L1050 736.6Z" stroke-width="1.5"/>
  <!-- prev -->
  <path d="M1136.7 732L1145.4 726.3V737.7Z" fill="#fff" stroke="none"/>
  <rect x="1147" y="724.5" width="1.3" height="15" fill="#fff" stroke="none"/>
  <!-- play -->
  <path d="M1184.6 726.6L1194.3 732.1L1184.6 737.7Z" fill="#fff" stroke="none"/>
  <!-- stop -->
  <rect x="1229.5" y="726.6" width="11" height="11" fill="#fff" stroke="none"/>
  <!-- next -->
  <rect x="1275.7" y="724.5" width="1.3" height="15" fill="#fff" stroke="none"/>
  <path d="M1278.6 726.3L1287.3 732L1278.6 737.7Z" fill="#fff" stroke="none"/>
  <!-- loop normal -->
  <path d="M1335.8 726.4H1320.5A2.5 2.5 0 0 0 1318.2 729V738.2A2.3 2.3 0 0 0 1320.5 740.4H1333.7A2.3 2.3 0 0 0 1336 738.2V731" stroke-width="1.9"/>
  <path d="M1331.8 722.9L1336 726.4L1331.8 726.4Z" fill="#fff" stroke-width="1.2"/>
  <text x="1320.3" y="736.2" fill="#fff" stroke="none" font-size="6.4" font-weight="bold" font-family="Liberation Sans">正常</text>
  <path d="M1340.8 729.8H1348.1L1344.45 734.3Z" fill="#fff" stroke="none"/>
  <!-- zoom in -->
  <circle cx="1385.7" cy="732.9" r="6.3" stroke-width="1.6"/>
  <path d="M1390.3 737.5L1394 741.2" stroke-width="1.6"/>
  <path d="M1385.7 730V735.8M1382.8 732.9H1388.6" stroke-width="2"/>
  <!-- slider -->
  <rect x="1417" y="731" width="75" height="4" rx="2" fill="#5a5a5e" stroke="none"/>
  <rect x="1417" y="731" width="10" height="4" rx="2" fill="#fff" stroke="none"/>
  <path d="M1425.2 728.8H1430.6V736.2L1427.9 737.8L1425.2 736.2Z" fill="#fff" stroke="none"/>
  <!-- zoom out button -->
  <rect x="1508.3" y="717.2" width="29.2" height="29.6" rx="3" fill="#38383b" stroke="none"/>
  <circle cx="1522.8" cy="732.7" r="6.3" stroke-width="1.5"/>
  <path d="M1527.4 737.3L1531 740.9" stroke-width="1.5"/>
  <path d="M1520 732.7H1525.8" stroke-width="2"/>
  <!-- download -->
  <path d="M1568.7 725.5V738M1564.3 733.8L1568.7 738.2L1573.1 733.8M1563.6 741.1H1573.8" stroke-width="1.5"/>
</svg>
<svg width="1605" height="904" style="left:0;top:0">
<rect x="510" y="782" width="1080" height="2" fill="#262627"/>
<rect x="510" y="784" width="1080" height="2" fill="#0f0f10"/>
<rect x="535" y="767" width="1" height="4" fill="#d0d0d0"/><rect x="535" y="775" width="1" height="4" fill="#d0d0d0"/>
<text x="535.5" y="762" text-anchor="middle" font-family="Liberation Sans" font-size="10" fill="#d8d8d8">0</text>
<rect x="559" y="775" width="1" height="7" fill="#d0d0d0"/>
<rect x="583" y="775" width="1" height="7" fill="#d0d0d0"/>
<rect x="607" y="775" width="1" height="7" fill="#d0d0d0"/>
<rect x="631" y="775" width="1" height="7" fill="#d0d0d0"/>
<rect x="655" y="767" width="1" height="4" fill="#d0d0d0"/><rect x="655" y="775" width="1" height="4" fill="#d0d0d0"/>
<text x="655.5" y="762" text-anchor="middle" font-family="Liberation Sans" font-size="10" fill="#d8d8d8">1</text>
<rect x="679" y="775" width="1" height="7" fill="#d0d0d0"/>
<rect x="703" y="775" width="1" height="7" fill="#d0d0d0"/>
<rect x="727" y="775" width="1" height="7" fill="#d0d0d0"/>
<rect x="751" y="775" width="1" height="7" fill="#d0d0d0"/>
<rect x="775" y="767" width="1" height="4" fill="#d0d0d0"/><rect x="775" y="775" width="1" height="4" fill="#d0d0d0"/>
<text x="775.5" y="762" text-anchor="middle" font-family="Liberation Sans" font-size="10" fill="#d8d8d8">2</text>
<rect x="799" y="775" width="1" height="7" fill="#d0d0d0"/>
<rect x="823" y="775" width="1" height="7" fill="#d0d0d0"/>
<rect x="847" y="775" width="1" height="7" fill="#d0d0d0"/>
<rect x="871" y="775" width="1" height="7" fill="#d0d0d0"/>
<rect x="895" y="767" width="1" height="4" fill="#d0d0d0"/><rect x="895" y="775" width="1" height="4" fill="#d0d0d0"/>
<text x="895.5" y="762" text-anchor="middle" font-family="Liberation Sans" font-size="10" fill="#d8d8d8">3</text>
<rect x="919" y="775" width="1" height="7" fill="#d0d0d0"/>
<rect x="943" y="775" width="1" height="7" fill="#d0d0d0"/>
<rect x="967" y="775" width="1" height="7" fill="#d0d0d0"/>
<rect x="991" y="775" width="1" height="7" fill="#d0d0d0"/>
<rect x="1015" y="767" width="1" height="4" fill="#d0d0d0"/><rect x="1015" y="775" width="1" height="4" fill="#d0d0d0"/>
<text x="1015.5" y="762" text-anchor="middle" font-family="Liberation Sans" font-size="10" fill="#d8d8d8">4</text>
<rect x="1039" y="775" width="1" height="7" fill="#d0d0d0"/>
<rect x="1063" y="775" width="1" height="7" fill="#d0d0d0"/>
<rect x="1087" y="775" width="1" height="7" fill="#d0d0d0"/>
<rect x="1111" y="775" width="1" height="7" fill="#d0d0d0"/>
<rect x="1135" y="767" width="1" height="4" fill="#d0d0d0"/><rect x="1135" y="775" width="1" height="4" fill="#d0d0d0"/>
<text x="1135.5" y="762" text-anchor="middle" font-family="Liberation Sans" font-size="10" fill="#d8d8d8">5</text>
<rect x="1159" y="775" width="1" height="7" fill="#d0d0d0"/>
<rect x="1183" y="775" width="1" height="7" fill="#d0d0d0"/>
<rect x="1207" y="775" width="1" height="7" fill="#d0d0d0"/>
<rect x="1231" y="775" width="1" height="7" fill="#d0d0d0"/>
<rect x="1255" y="767" width="1" height="4" fill="#d0d0d0"/><rect x="1255" y="775" width="1" height="4" fill="#d0d0d0"/>
<text x="1255.5" y="762" text-anchor="middle" font-family="Liberation Sans" font-size="10" fill="#d8d8d8">6</text>
<rect x="1279" y="775" width="1" height="7" fill="#d0d0d0"/>
<rect x="1303" y="775" width="1" height="7" fill="#d0d0d0"/>
<rect x="1327" y="775" width="1" height="7" fill="#d0d0d0"/>
<rect x="1351" y="775" width="1" height="7" fill="#d0d0d0"/>
<rect x="1375" y="767" width="1" height="4" fill="#d0d0d0"/><rect x="1375" y="775" width="1" height="4" fill="#d0d0d0"/>
<text x="1375.5" y="762" text-anchor="middle" font-family="Liberation Sans" font-size="10" fill="#d8d8d8">7</text>
<rect x="1399" y="775" width="1" height="7" fill="#d0d0d0"/>
<rect x="1423" y="775" width="1" height="7" fill="#d0d0d0"/>
<rect x="1447" y="775" width="1" height="7" fill="#d0d0d0"/>
<rect x="1471" y="775" width="1" height="7" fill="#d0d0d0"/>
<rect x="1495" y="767" width="1" height="4" fill="#d0d0d0"/><rect x="1495" y="775" width="1" height="4" fill="#d0d0d0"/>
<text x="1495.5" y="762" text-anchor="middle" font-family="Liberation Sans" font-size="10" fill="#d8d8d8">8</text>
<rect x="1519" y="775" width="1" height="7" fill="#d0d0d0"/>
<rect x="1543" y="775" width="1" height="7" fill="#d0d0d0"/>
<rect x="1567" y="775" width="1" height="7" fill="#d0d0d0"/>
<path d="M655.4 818.2L661.0 824.2L655.4 830.2L649.8 824.2Z" fill="#fff"/>
<path d="M722.7 818.2L728.3 824.2L722.7 830.2L717.1 824.2Z" fill="#fff"/>
<path d="M775.6 818.2L781.2 824.2L775.6 830.2L770.0 824.2Z" fill="#fff"/>
<path d="M655.4 844.4L661.0 850.4L655.4 856.4L649.8 850.4Z" fill="#fff"/>
<path d="M722.7 844.4L728.3 850.4L722.7 856.4L717.1 850.4Z" fill="#fff"/>
<path d="M775.6 844.4L781.2 850.4L775.6 856.4L770.0 850.4Z" fill="#fff"/>
<rect x="773.5" y="770" width="3" height="132" fill="#fff"/>
<rect x="772.5" y="767" width="5" height="10" rx="0.5" fill="#fff"/>
<path d="M298.3 795H309.4L303.85 800.8Z" fill="#fff"/>
<rect x="1590" y="782" width="10" height="15" fill="#141415"/><path d="M1592 806L1595 802.5L1598 806Z" fill="#3e3e40"/>
<rect x="1592.2" y="883" width="5.8" height="18.5" rx="2.9" fill="#3a3a3e"/>
<rect x="1504" y="752.6" width="45" height="29.4" rx="3" fill="#323234"/>
<rect x="1503" y="715" width="47" height="68" fill="none" stroke="#ee0e12" stroke-width="2"/>
</svg>
<div class="t" style="left:1514px;top:762px">缩小</div>
<svg width="1605" height="904" style="left:0;top:0">
<path d="M1524.9 740Q1524.9 738.4 1526.25 738.4Q1527.6 738.4 1527.6 740V744.8Q1527.8 743.8 1528.95 743.8Q1530.3 743.8 1530.3 745.2Q1530.5 744.2 1531.75 744.2Q1533.2 744.2 1533.2 745.6Q1533.4 744.8 1534.7 744.8Q1536.2 744.8 1536.2 746.4V755Q1536.2 758.6 1533.6 760.6H1528.8Q1526.4 760.2 1524.4 757.8L1520.2 752.8Q1519.5 751.4 1520.7 750.8Q1521.9 750.3 1523 751.4L1524.9 753.2Z" fill="#fff" stroke="#05050a" stroke-width="1"/>
<path d="M1527.6 744.8V748.8M1530.3 745.2V748.8M1533.2 745.6V748.8" stroke="#05050a" stroke-width="0.9"/>
</svg>
</body></html>
